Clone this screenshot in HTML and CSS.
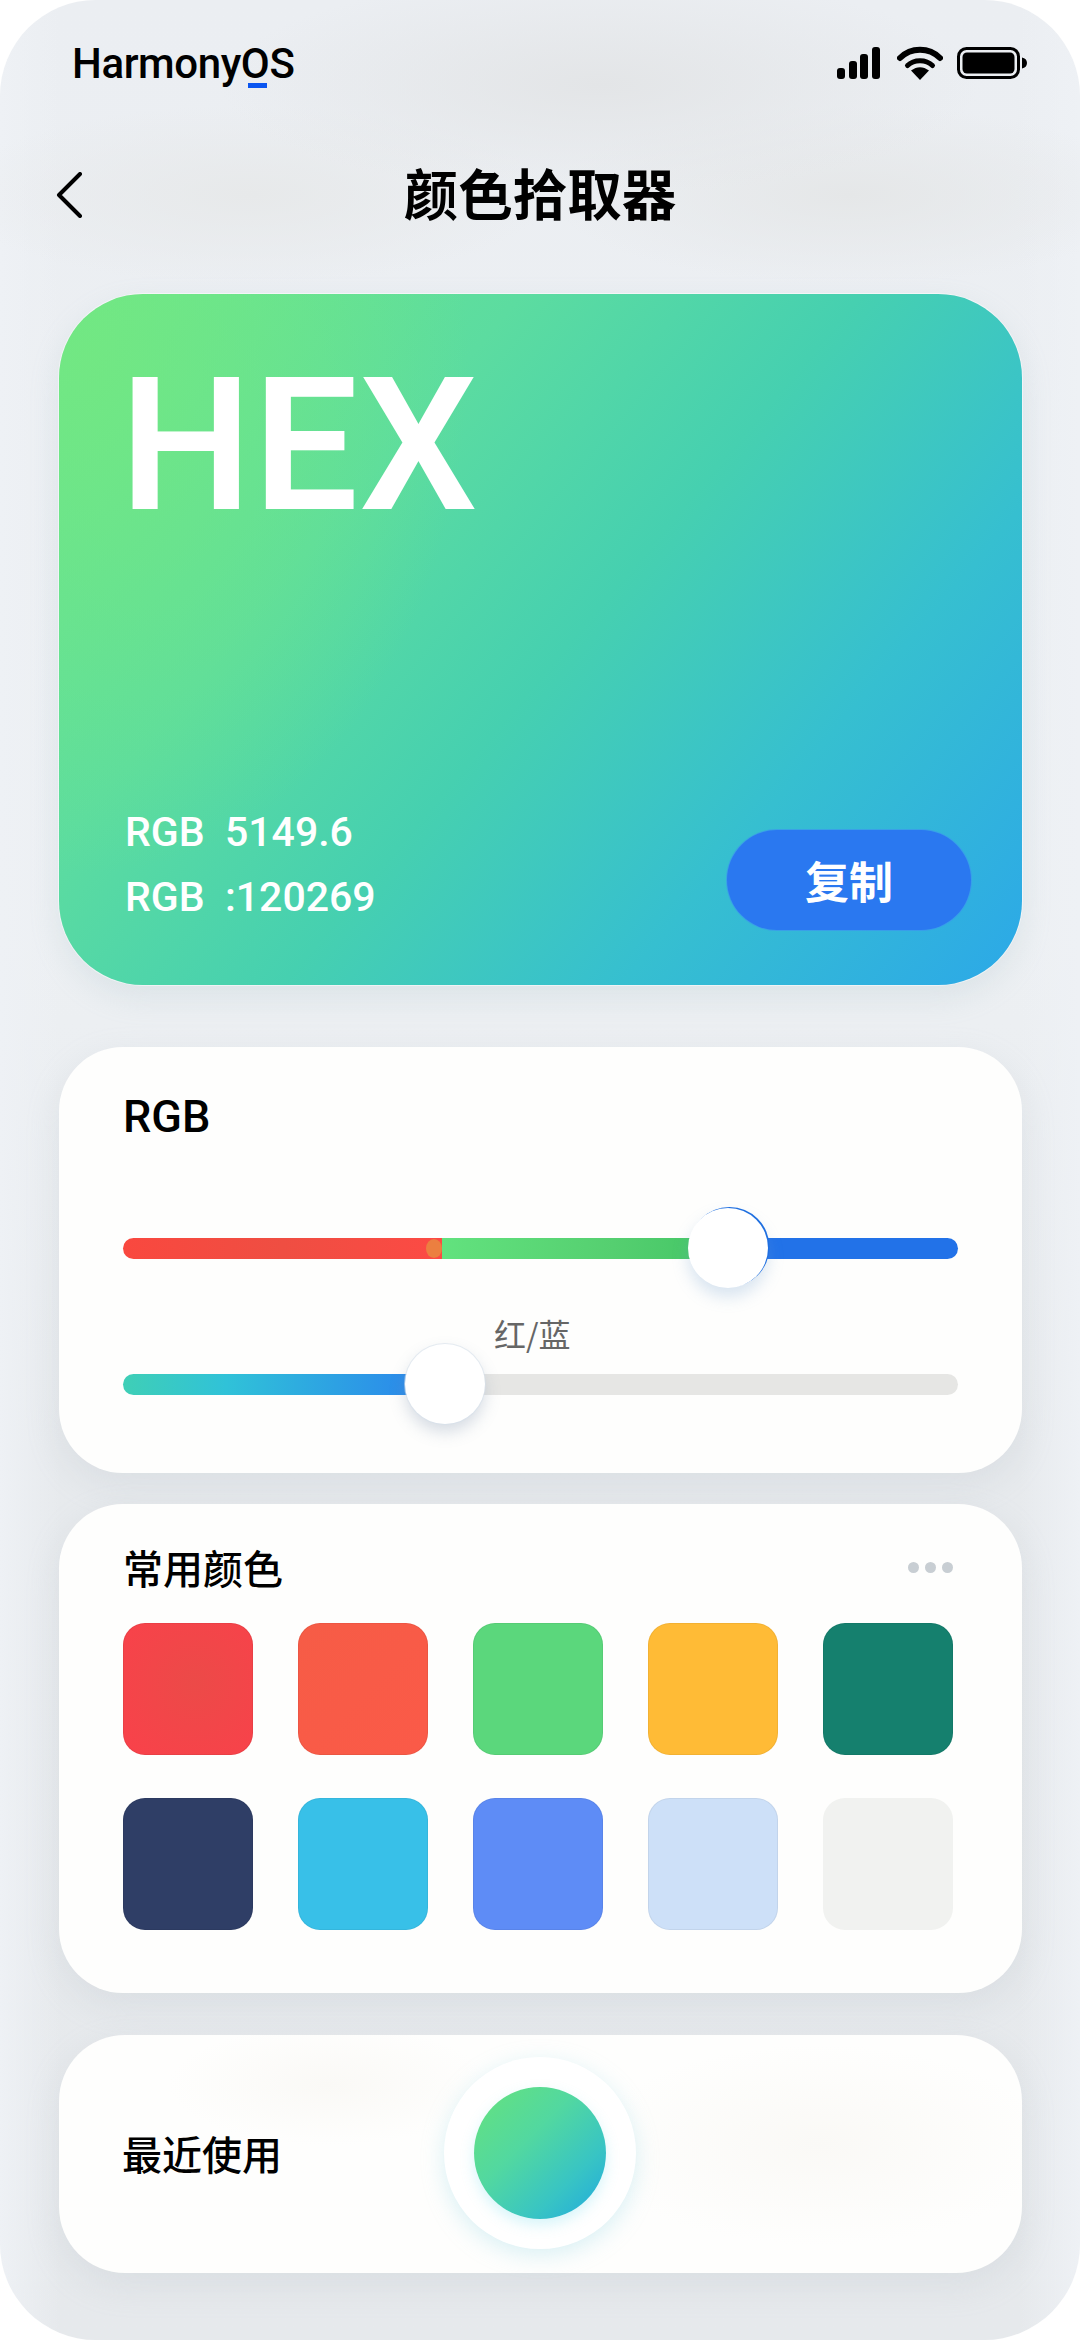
FILE: index.html
```html
<!DOCTYPE html>
<html lang="zh">
<head>
<meta charset="utf-8">
<title>颜色拾取器</title>
<link rel="stylesheet" href="styles.css">
</head>
<body>
<div class="phone">
  <header class="status">
    <div class="brand">Harmony<span class="brand-o">O<i class="brand-mark"></i></span>S</div>
    <div class="status-icons">
      <svg class="ic-signal" viewBox="0 0 43 32"><rect x="0" y="21" width="8" height="11" rx="3"/><rect x="12" y="14" width="8" height="18" rx="3"/><rect x="23" y="7" width="8" height="25" rx="3"/><rect x="35" y="0" width="8" height="32" rx="3"/></svg>
      <svg class="ic-wifi" viewBox="0 0 46 34"><path d="M3 12C14 1 32 1 43 12" fill="none" stroke="#000" stroke-width="6" stroke-linecap="round"/><path d="M10.500 19.500C17 13 29 13 35.500 19.500" fill="none" stroke="#000" stroke-width="5" stroke-linecap="round"/><path d="M14 24.500C20 20 26 20 32 24.500L23 34Z"/></svg>
      <svg class="ic-battery" viewBox="0 0 70 32"><rect x="1.500" y="1.500" width="60" height="29" rx="8" fill="none" stroke="#000" stroke-width="3"/><rect x="5.500" y="5.500" width="52" height="21" rx="4.500"/><path d="M65 10.500c3 .5 5 2.500 5 5.500s-2 5-5 5.500z"/></svg>
    </div>
  </header>
  <nav class="nav">
    <svg class="back" viewBox="0 0 28 46"><path d="M25 2L4 23L25 44" fill="none" stroke="#000" stroke-width="4" stroke-linecap="round" stroke-linejoin="round"/></svg>
    <h1 class="nav-title">颜色拾取器</h1>
  </nav>

  <section class="hero">
    <div class="hex">HEX</div>
    <div class="hero-foot">
      <div class="values">
        <div>RGB&nbsp;&nbsp;5149.6</div>
        <div>RGB&nbsp;&nbsp;:120269</div>
      </div>
      <button class="copy">复制</button>
    </div>
  </section>

  <section class="card card-rgb">
    <h2 class="card-title">RGB</h2>
    <div class="track track-one">
      <div class="seg seg-red"></div>
      <div class="seg seg-green"></div>
      <div class="seg seg-blue"></div>
      <i class="joint"></i>
      <i class="thumb thumb-one"></i>
    </div>
    <div class="slider-label">红/蓝</div>
    <div class="track track-two">
      <div class="seg seg-fill"></div>
      <div class="seg seg-rest"></div>
      <i class="thumb thumb-two"></i>
    </div>
  </section>

  <section class="card card-palette">
    <div class="palette-head">
      <h2 class="card-title">常用颜色</h2>
      <div class="dots"><i></i><i></i><i></i></div>
    </div>
    <div class="swatches">
      <div class="sw sw1"></div><div class="sw sw2"></div><div class="sw sw3"></div><div class="sw sw4"></div><div class="sw sw5"></div>
      <div class="sw sw6"></div><div class="sw sw7"></div><div class="sw sw8"></div><div class="sw sw9"></div><div class="sw sw10"></div>
    </div>
  </section>

  <section class="card card-recent">
    <h2 class="card-title recent-title">最近使用</h2>
    <div class="halo"><div class="orb"></div></div>
  </section>
</div>
</body>
</html>
```
FILE: styles.css
```css
* { box-sizing: border-box; }
html, body { margin: 0; padding: 0; background: #fff; }
body { width: 1080px; height: 2340px; font-family: Roboto, "Noto Sans CJK SC", sans-serif; color: #000; }

.phone {
  width: 1080px; height: 2340px; border-radius: 96px; overflow: hidden;
  padding: 0 58px 0 59px;
  display: flex; flex-direction: column;
  background:
    radial-gradient(ellipse 380px 110px at 600px 85px, #e3e5e7 0%, rgba(227,229,231,0) 100%),
    radial-gradient(ellipse 300px 90px at 250px 195px, #e7e9ea 0%, rgba(231,233,234,0) 100%),
    radial-gradient(ellipse 300px 90px at 850px 195px, #e5e7e8 0%, rgba(229,231,232,0) 100%),
    linear-gradient(90deg, #eef1f5 0, rgba(238,241,245,0) 60px, rgba(238,241,245,0) 1020px, #eef1f5 1080px),
    linear-gradient(180deg, #ebeef2 0%, #edf0f3 40%, #e7eaed 62%, #e6e9ec 100%);
}

.status { height: 130px; flex: none; display: flex; justify-content: space-between; padding: 47px 0 0 13px; }
.brand { font-size: 42px; font-weight: 500; line-height: 34px; letter-spacing: -0.4px; height: 34px; white-space: nowrap; }
.brand-o { position: relative; display: inline-block; }
.brand-mark { position: absolute; left: 7px; top: 36px; width: 19px; height: 5px; background: #0a55f0; }
.status-icons { display: flex; align-items: flex-start; height: 34px; margin-right: -5px; }
.ic-signal { width: 43px; height: 32px; }
.ic-wifi { width: 46px; height: 34px; margin-left: 17px; margin-top: -1px; }
.ic-battery { width: 70px; height: 32px; margin-left: 14px; }

.nav { height: 124px; flex: none; margin: 0 -58px 0 -59px; display: flex; align-items: center; justify-content: center; position: relative; }
.back { position: absolute; left: 55px; top: 42px; width: 28px; height: 46px; }
.nav-title { margin: 0; font: 700 54.500px/1 "Noto Sans CJK SC", sans-serif; }

.hero {
  margin-top: 40px; height: 691px; flex: none; border-radius: 84px;
  padding: 68px 51px 55px 66px;
  display: flex; flex-direction: column; justify-content: space-between;
  color: #fff;
  background:
    radial-gradient(ellipse 380px 520px at 30px 60px, rgba(116,232,128,.8) 0%, rgba(116,232,128,0) 100%),
    linear-gradient(130deg, #6ce68c 0%, #5cdca0 30%, #46d0b0 52%, #36bfd0 74%, #2ca8e8 100%);
  box-shadow: 0 0 0 1px rgba(255,255,255,.5), 0 12px 30px rgba(150,180,190,.2);
}
.hex { font-size: 186px; line-height: 166px; font-weight: 600; height: 166px; letter-spacing: 1.500px; margin-left: -5px; }
.hero-foot { display: flex; justify-content: space-between; align-items: flex-end; }
.values { font-size: 41px; line-height: 65px; font-weight: 500; margin-bottom: 0; }
.copy {
  width: 244px; height: 100px; border: 0; border-radius: 50px;
  background: #2a78f0; color: #fff;
  font: 700 44px/1 "Noto Sans CJK SC", sans-serif;
  box-shadow: 0 0 0 1px rgba(60,150,240,.7);
}

.card { flex: none; background: #fefefd; border-radius: 64px; box-shadow: 0 12px 34px rgba(170,178,190,.2); }
.card-title { margin: 0; font: 500 40px/1 Roboto, "Noto Sans CJK SC", sans-serif; }

.card-rgb { margin-top: 62px; height: 426px; padding: 47px 64px 0 64px; }
.card-rgb .card-title { font-size: 45px; }
.track { position: relative; display: flex; height: 21px; border-radius: 11px; }
.track-one { margin-top: 99px; }
.seg { height: 100%; }
.seg-red { width: 319px; background: linear-gradient(90deg, #f9483f, #ef4e42 50%, #fc4a44); border-radius: 11px 0 0 11px; }
.seg-green { width: 285px; background: linear-gradient(90deg, #62e27e, #55cf70 60%, #42c564); }
.seg-blue { flex: 1; background: #2272e8; border-radius: 0 11px 11px 0; }
.joint { position: absolute; left: 303px; top: 1px; width: 16px; height: 19px; border-radius: 50%; background: #ec7f40; }
.thumb { position: absolute; top: 50%; width: 80px; height: 80px; margin: -41px 0 0 -40px; border-radius: 50%; background: #fff; }
.thumb-one { left: 605px; box-shadow: 1.500px -1px 0 #1f6fe0, 0 9px 16px rgba(120,160,210,.28); }
.thumb-two { left: 322px; box-shadow: 0 0 0 1px rgba(215,225,235,.6), 0 8px 16px rgba(120,140,170,.3); }
.slider-label { margin-top: 56px; margin-left: 371px; font: 400 32px/36px "Noto Sans CJK SC", sans-serif; color: #666; height: 36px; }
.track-two { margin-top: 23px; }
.seg-fill { width: 322px; background: linear-gradient(90deg, #3fcfb6, #30c2d8 32%, #2a80ee 100%); border-radius: 11px 0 0 11px; }
.seg-rest { flex: 1; background: #e6e6e4; border-radius: 0 11px 11px 0; }

.card-palette { margin-top: 31px; height: 489px; padding: 47px 69px 0 64px; }
.palette-head { display: flex; justify-content: space-between; align-items: center; height: 40px; }
.dots { display: flex; gap: 6px; margin-top: -8px; }
.dots i { width: 11px; height: 11px; border-radius: 50%; background: #c8ced3; }
.swatches { margin-top: 32px; display: grid; grid-template-columns: repeat(5, 129.500px); grid-auto-rows: 132px; column-gap: 45.500px; row-gap: 43px; }
.sw { border-radius: 22px; border: 1px solid rgba(0,0,0,.05); }
.sw1 { background: radial-gradient(circle at 55% 45%, #ec4a48, #f8424a 90%); }
.sw2 { background: linear-gradient(135deg, #f65c46, #fb5a48); }
.sw3 { background: #5bd77c; }
.sw4 { background: #ffbb36; }
.sw5 { background: #15806e; }
.sw6 { background: #2f3e66; }
.sw7 { background: #38c0e8; }
.sw8 { background: #5e8cf6; }
.sw9 { background: #cde0f8; }
.sw10 { background: #f1f2f0; border-color: transparent; }

.card-recent {
  margin-top: 42px; height: 238px; padding: 6px 63px 0; display: flex; align-items: center; position: relative; border-radius: 66px;
  background:
    radial-gradient(ellipse 230px 100px at 760px 110px, #faf9f6 0%, rgba(250,249,246,0) 100%),
    radial-gradient(ellipse 160px 60px at 270px 50px, #faf9f6 0%, rgba(250,249,246,0) 100%),
    #fefefd;
}
.halo {
  position: absolute; left: 385px; top: 22px; width: 192px; height: 192px; border-radius: 50%;
  display: flex; align-items: center; justify-content: center;
  background: #fff; box-shadow: 0 6px 22px rgba(150,215,230,.35);
}
.orb { width: 132px; height: 132px; border-radius: 50%; background: linear-gradient(135deg, #66e27c 0%, #52d8a0 40%, #38c4c4 72%, #1fa8e0 100%); box-shadow: 0 6px 14px rgba(90,215,235,.25); }
```
